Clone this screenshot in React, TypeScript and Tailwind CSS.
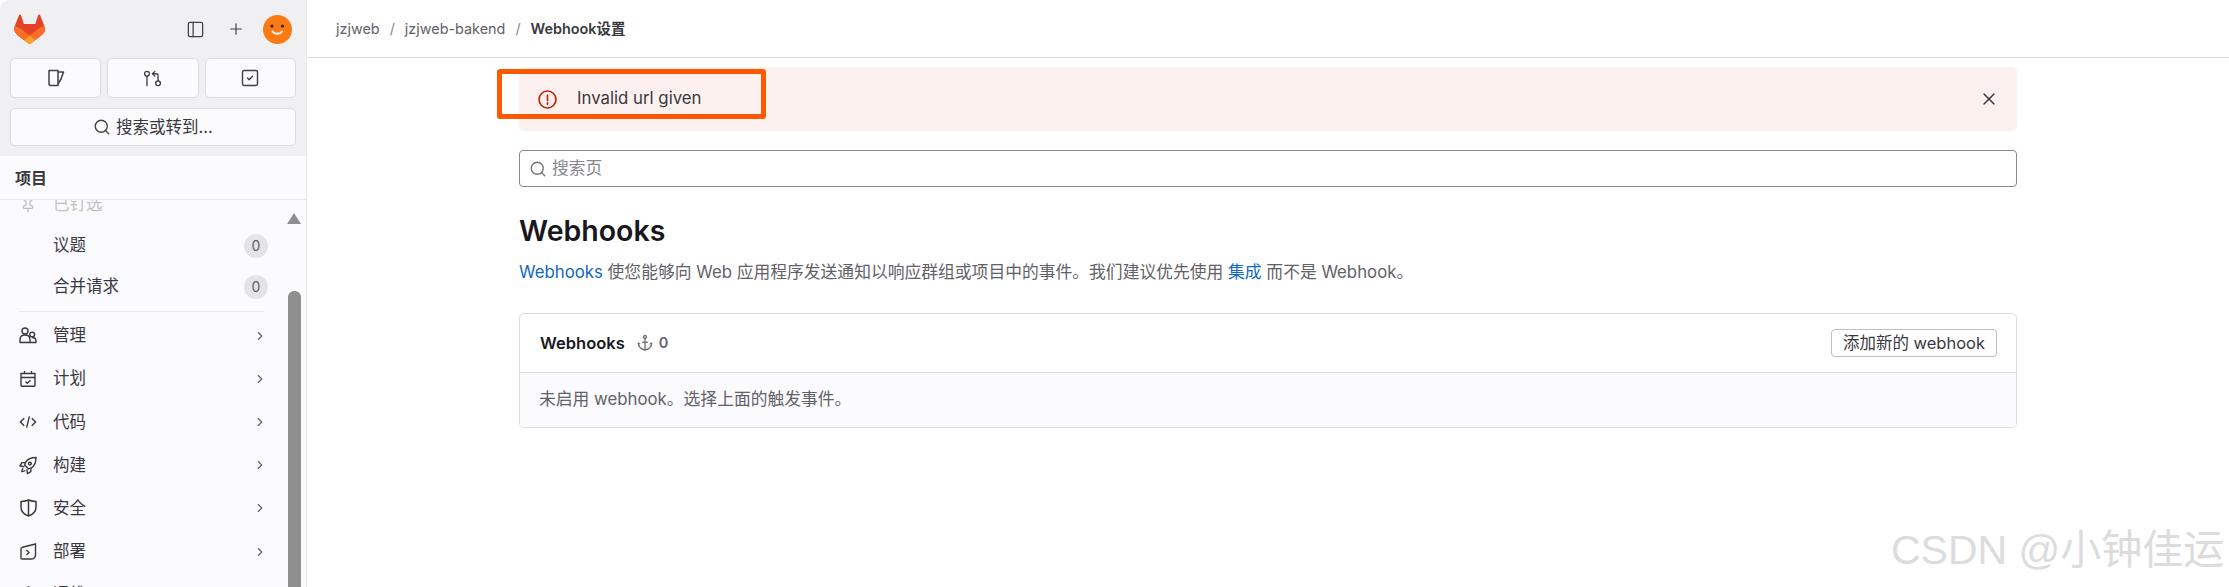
import { Anchor, ChevronRight, GitPullRequestArrow, PanelLeft, Plus, Search, SquareCheck, X, Pin } from "lucide-react";

const font = { fontFamily: '"Inter","Noto Sans CJK SC",sans-serif' };

function Tanuki() {
  return (
    <svg width="31" height="30" viewBox="0 0 25 24">
      <path d="M24.5 9.7l-.03-.09L21.1.87a.88.88 0 0 0-1.67.08l-2.27 6.95H7.97L5.7.95A.88.88 0 0 0 4.03.87L.66 9.6l-.03.1a6.25 6.25 0 0 0 2.07 7.22l.01.01.03.02 5.13 3.84 2.54 1.92 1.55 1.17a1.04 1.04 0 0 0 1.26 0l1.55-1.17 2.54-1.92 5.16-3.86a6.25 6.25 0 0 0 2.07-7.22z" fill="#E24329" />
      <path d="M24.5 9.7l-.03-.09a11.44 11.44 0 0 0-4.56 2.05l-7.38 5.58 4.7 3.55 5.16-3.86a6.25 6.25 0 0 0 2.07-7.22z" fill="#FC6D26" />
      <path d="M7.83 20.79l2.54 1.92 1.55 1.17a1.04 1.04 0 0 0 1.26 0l1.55-1.17 2.54-1.92-4.71-3.55-4.73 3.55z" fill="#FCA326" />
      <path d="M5.22 11.66A11.4 11.4 0 0 0 .66 9.61l-.03.09a6.25 6.25 0 0 0 2.07 7.22l.01.01.03.02 5.13 3.84 4.7-3.55-7.35-5.58z" fill="#FC6D26" />
    </svg>
  );
}

function Avatar() {
  return (
    <div className="w-[29px] h-[29px] rounded-full bg-[#fc7a14]">
      <svg width="29" height="29" viewBox="0 0 29 29">
        <circle cx="9" cy="11" r="1.6" fill="#3a2410" />
        <circle cx="19.5" cy="11" r="1.6" fill="#3a2410" />
        <path d="M9.5 16.5c2 3 7.5 3 9.500 0" stroke="#fff" strokeWidth="1.8" fill="none" strokeLinecap="round" />
      </svg>
    </div>
  );
}

function IssueIcon() {
  return (
    <svg width="18" height="18" viewBox="0 0 18 18" fill="none" stroke="#3f3f46" strokeWidth="1.5" strokeLinejoin="round">
      <path d="M2.500 1.500h8.500v15H3.500a1.500 1.500 0 0 1-1.500-1.500V2a.5.5 0 0 1 .5-.5z" />
      <path d="M11 3h5.500l-2.500 7-3 5" />
    </svg>
  );
}

function UsersIcon() {
  return (
    <svg width="18" height="17" viewBox="0 0 18 17" fill="none" stroke="#3a383f" strokeWidth="1.4">
      <circle cx="6" cy="4" r="3" />
      <path d="M1 15.500V12.500c0-3 2-4.500 5-4.500s5 1.500 5 4.500v3z" strokeLinejoin="round" />
      <circle cx="13.200" cy="7.500" r="2.400" />
      <path d="M11 15.500h6V14c0-2-1.500-3.500-4-3.500" strokeLinejoin="round" />
    </svg>
  );
}

function PlanIcon() {
  return (
    <svg width="16" height="17" viewBox="0 0 16 17" fill="none" stroke="#3a383f" strokeWidth="1.4">
      <path d="M1 3.500h14v12a.7.7 0 0 1-.7.7H1.700a.7.700 0 0 1-.7-.7z" />
      <path d="M1 7.500h14M4.500 1v3M11.500 1v3" />
      <path d="M5.500 11.500l1.800 1.800 3.200-3" />
    </svg>
  );
}

function CodeIcon() {
  return (
    <svg width="19" height="14" viewBox="0 0 19 14" fill="none" stroke="#3a383f" strokeWidth="1.500">
      <path d="M5.500 3L1.500 7l4 4M13.500 3l4 4-4 4M11 1L8 13" />
    </svg>
  );
}

function RocketIcon() {
  return (
    <svg width="19" height="19" viewBox="0 0 19 19" fill="none" stroke="#3a383f" strokeWidth="1.500" strokeLinejoin="round">
      <path d="M18 1c-5.500 0-9 1.800-11 5l-1 3 4 4 3-1c3.200-2 5-5.500 5-11z" />
      <circle cx="11.500" cy="7.500" r="1.500" />
      <path d="M6.800 6.500H3L1 10l4.700.8M12.500 12.300V16L9 18l-.8-4.700M4.500 12.500c-1 .5-1.500 2-1.500 3.500 1.500 0 3-.5 3.500-1.500" />
    </svg>
  );
}

function ShieldIcon() {
  return (
    <svg width="17" height="18" viewBox="0 0 17 18" fill="none" stroke="#3a383f" strokeWidth="1.500" strokeLinejoin="round">
      <path d="M1 2.500C3.500 2.500 6 2 8.500 1c2.500 1 5 1.500 7.500 1.500V8c0 4-3 7.500-7.500 9C4 15.500 1 12 1 8z" />
      <path d="M8.500 1v16" />
    </svg>
  );
}

function DeployIcon() {
  return (
    <svg width="17" height="17" viewBox="0 0 17 17" fill="none" stroke="#3a383f" strokeWidth="1.400">
      <path d="M1 6v9a1 1 0 0 0 1 1h9a4 4 0 0 0 4.500-4" />
      <path d="M1 6c0-1 .6-1.500 1.500-1.800L15.500 1v11" />
      <path d="M6.500 7l2.500 2.500L6.500 12" />
    </svg>
  );
}

function NavRow({ icon, label }: { icon: React.ReactNode; label: string }) {
  return (
    <div className="h-[43.2px] flex items-center shrink-0 pl-[19px]">
      <div className="w-[18px] mr-[16px] flex justify-center shrink-0">{icon}</div>
      <span className="flex-1 text-[16.5px] text-[#3a383f]">{label}</span>
      <ChevronRight size={14} color="#626168" className="mr-[39px]" />
    </div>
  );
}

function CountRow({ label }: { label: string }) {
  return (
    <div className="h-[41px] flex items-center pl-[53px] pr-[38px] shrink-0">
      <span className="flex-1 text-[16.5px] text-[#3a383f]">{label}</span>
      <span className="w-[24px] h-[24px] rounded-full bg-[#e4e4e6] text-[14px] text-[#626168] flex items-center justify-center">0</span>
    </div>
  );
}

function Sidebar() {
  return (
    <aside className="relative w-[307px] shrink-0 h-full border-r border-[#e7e6ea] bg-[#fbfafd] flex flex-col">
      <div className="bg-[#f0f0f3] h-[156px] px-[10px] shrink-0 rounded-tl-[10px]">
        <div className="h-[58px] flex items-center pl-[4px] pr-[4px]">
          <Tanuki />
          <div className="flex-1" />
          <PanelLeft size={19} color="#3f3f46" strokeWidth={1.6} className="mr-[22px]" />
          <Plus size={18} color="#3f3f46" strokeWidth={1.6} className="mr-[18px]" />
          <Avatar />
        </div>
        <div className="grid grid-cols-3 gap-[6px] h-[40px]">
          <div className="border border-[#dcdcde] rounded-[5px] bg-[#fbfafd] flex items-center justify-center"><IssueIcon /></div>
          <div className="border border-[#dcdcde] rounded-[5px] bg-[#fbfafd] flex items-center justify-center"><GitPullRequestArrow size={19} color="#3f3f46" strokeWidth={1.7} /></div>
          <div className="border border-[#dcdcde] rounded-[5px] bg-[#fbfafd] flex items-center justify-center"><SquareCheck size={20} color="#3f3f46" strokeWidth={1.7} /></div>
        </div>
        <div className="mt-[10px] h-[38px] border border-[#dcdcde] rounded-[5px] bg-[#fbfafd] flex items-center justify-center gap-[5px] text-[16.5px] text-[#3a383f]">
          <Search size={18} color="#3f3f46" strokeWidth={1.8} />
          <span>搜索或转到...</span>
        </div>
      </div>
      <div className="h-[44px] shrink-0 border-b border-[#e7e6ea] flex items-center pl-[15px] text-[16px] font-bold text-[#3a383f]">项目</div>
      <div className="relative flex-1 min-h-0 overflow-hidden">
        <div className="-mt-[16px] flex flex-col">
          <div className="h-[41px] flex items-center shrink-0 opacity-30 pl-[19px]">
            <div className="w-[18px] mr-[16px] flex justify-center"><Pin size={16} color="#3a383f" /></div>
            <span className="text-[16.5px] text-[#3a383f]">已钉选</span>
          </div>
          <CountRow label="议题" />
          <CountRow label="合并请求" />
          <div className="mx-[19px] w-[245px] border-t border-[#e7e6ea] mt-[4px] mb-[2px]" />
          <NavRow icon={<UsersIcon />} label="管理" />
          <NavRow icon={<PlanIcon />} label="计划" />
          <NavRow icon={<CodeIcon />} label="代码" />
          <NavRow icon={<RocketIcon />} label="构建" />
          <NavRow icon={<ShieldIcon />} label="安全" />
          <NavRow icon={<DeployIcon />} label="部署" />
          <NavRow icon={<ShieldIcon />} label="运维" />
        </div>
        <div className="absolute left-[287px] top-[13px] w-0 h-0 border-l-[7.5px] border-r-[7.5px] border-b-[11px] border-l-transparent border-r-transparent border-b-[#8f8f8f]" />
        <div className="absolute left-[288px] top-[91px] bottom-0 w-[13px] bg-[#8f8f8f] rounded-t-[6px]" />
      </div>
    </aside>
  );
}

function Main() {
  return (
    <main className="flex-1 min-w-0 h-full flex flex-col bg-white">
      <div className="h-[58px] shrink-0 border-b border-[#dcdcde] flex items-center pl-[29px] text-[14.4px] text-[#626168]">
        <span>jzjweb</span>
        <span className="mx-[10px] text-[#89888d]">/</span>
        <span>jzjweb-bakend</span>
        <span className="mx-[10px] text-[#89888d]">/</span>
        <span className="font-semibold text-[#3a383f] text-[14.4px]">Webhook设置</span>
      </div>
      <div className="pl-[212px] pr-[212px] pt-[9px] flex flex-col">
        <div className="h-[64px] bg-[#fcf1ef] rounded-[5px] flex items-center pl-[19px] pr-[18px]">
          <svg width="19" height="19" viewBox="0 0 19 19" fill="none" stroke="#c91c00" strokeWidth="1.600">
            <circle cx="9.500" cy="9.500" r="8.500" />
            <path d="M9.500 5v5.500M9.500 12.800v1.400" strokeLinecap="round" />
          </svg>
          <span className="ml-[20px] flex-1 text-[16.800px] text-[#3a383f]">Invalid url given</span>
          <X size={20} color="#3a383f" strokeWidth={1.800} />
        </div>
        <div className="mt-[19px] h-[37px] border border-[#89888d] rounded-[4px] flex items-center pl-[9px] text-[16.800px] text-[#89888d]">
          <Search size={18} color="#737278" strokeWidth={1.800} />
          <span className="ml-[5px]">搜索页</span>
        </div>
        <h1 className="mt-[26px] text-[28.500px] leading-[36px] font-semibold text-[#18171d]">Webhooks</h1>
        <p className="mt-[11px] text-[16.800px] leading-[24px] text-[#626168]">
          <span className="text-[#1068bf]">Webhooks</span> 使您能够向 Web 应用程序发送通知以响应群组或项目中的事件。我们建议优先使用 <span className="text-[#1068bf]">集成</span> 而不是 Webhook。
        </p>
        <div className="mt-[29px] border border-[#dcdcde] rounded-[5px] overflow-hidden">
          <div className="h-[59px] border-b border-[#dcdcde] flex items-center pl-[20px] pr-[19px]">
            <span className="text-[16.500px] font-semibold text-[#18171d]">Webhooks</span>
            <Anchor size={18} color="#737278" strokeWidth={1.800} className="ml-[11px]" />
            <span className="ml-[5px] text-[14.500px] font-semibold text-[#626168]">0</span>
            <div className="flex-1" />
            <div className="h-[28px] w-[166px] border border-[#bfbfc3] rounded-[4px] flex items-center justify-center text-[16.500px] text-[#3a383f]">添加新的 webhook</div>
          </div>
          <div className="h-[54px] bg-[#fbfafd] flex items-center pl-[19px] text-[16.800px] text-[#626168]">未启用 webhook。选择上面的触发事件。</div>
        </div>
      </div>
    </main>
  );
}

export default function App() {
  return (
    <div className="relative w-[2229px] h-[587px] overflow-hidden flex bg-white" style={font}>
      <Sidebar />
      <Main />
      <div className="absolute left-[497px] top-[69px] w-[269px] h-[50px] border-[5px] border-[#fe5900] rounded-[3px]" />
      <div
        className="absolute left-[1891px] top-[525px] text-[41px] leading-[50px] text-[#dcdcdc] whitespace-nowrap"
        style={{ fontFamily: '"Liberation Sans","Noto Sans CJK SC",sans-serif' }}
      >
        CSDN @小钟佳运
      </div>
    </div>
  );
}
